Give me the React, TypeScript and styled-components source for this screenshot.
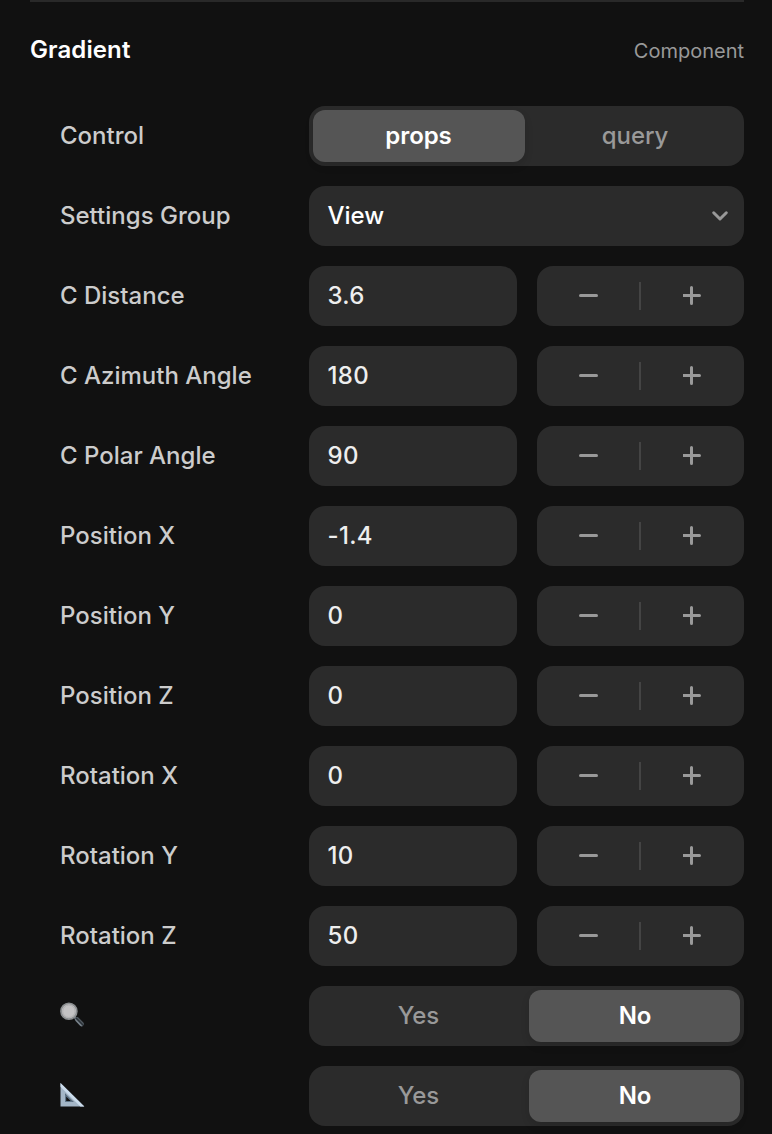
import React, { useState } from 'react';
import styled, { createGlobalStyle } from 'styled-components';

const GlobalStyle = createGlobalStyle`
  * { box-sizing: border-box; }
  body {
    margin: 0;
    background: #111111;
    font-family: Inter, sans-serif;
    -webkit-font-smoothing: antialiased;
  }
  button, input { font: inherit; letter-spacing: inherit; }
`;

const Panel = styled.main`
  width: 772px;
  height: 1134px;
  padding: 0 28px 0 30px;
  overflow: hidden;
  font-size: 24px;
  line-height: 30px;
  color: #cccccc;
`;

const Header = styled.header`
  display: flex;
  align-items: center;
  justify-content: space-between;
  height: 106px;
  padding-bottom: 8px;
  border-top: 2px solid #292929;
`;

const Title = styled.h2`
  margin: 0;
  font-size: 24px;
  font-weight: 600;
  letter-spacing: 0.1px;
  color: #ffffff;
`;

const Kind = styled.span`
  padding-top: 1px;
  font-size: 20px;
  color: #999999;
`;

const Rows = styled.div`
  display: flex;
  flex-direction: column;
  gap: 20px;
  padding-left: 30px;
`;

const Row = styled.div`
  display: grid;
  grid-template-columns: 249px 435px;
  align-items: center;
  height: 60px;
`;

const Label = styled.span`
  display: flex;
  font-weight: 500;
  white-space: nowrap;
`;

const IconLabel = styled(Label)`
  padding-bottom: 2px;
`;

const Segments = styled.div`
  display: grid;
  grid-template-columns: 212px 211px;
  gap: 4px;
  height: 60px;
  padding: 4px;
  border-radius: 16px;
  background: #2b2b2b;
`;

const Segment = styled.button<{ $active: boolean }>`
  padding: 0 1px 0 0;
  border: 0;
  border-radius: 12px;
  background: ${({ $active }) => ($active ? '#555555' : 'transparent')};
  box-shadow: ${({ $active }) => ($active ? '0 4px 8px rgba(0, 0, 0, 0.12)' : 'none')};
  color: ${({ $active }) => ($active ? '#ffffff' : '#999999')};
  font-weight: ${({ $active }) => ($active ? 600 : 500)};
  letter-spacing: -0.1px;

  &:last-child { padding: 0 0 0 1px; }
`;

const Select = styled.button`
  display: flex;
  align-items: center;
  justify-content: space-between;
  height: 60px;
  padding: 0 15px 0 18.5px;
  border: 0;
  border-radius: 16px;
  background: #2b2b2b;
  color: #ffffff;
  font-weight: 500;
`;

const NumberControl = styled.div`
  display: grid;
  grid-template-columns: 208px 207px;
  gap: 20px;
`;

const NumberField = styled.input`
  width: 100%;
  height: 60px;
  padding: 0 18.5px 2px;
  border: 0;
  border-radius: 16px;
  outline: none;
  background: #2b2b2b;
  color: #eeeeee;
  font-weight: 450;
  letter-spacing: 0.3px;
`;

const Stepper = styled.div`
  display: grid;
  grid-template-columns: 102px 2px 103px;
  align-items: center;
  height: 60px;
  border-radius: 16px;
  background: #2b2b2b;
`;

const StepButton = styled.button`
  display: flex;
  align-items: center;
  justify-content: center;
  height: 60px;
  padding: 0;
  border: 0;
  background: none;
  color: #999999;
`;

const Divider = styled.span`
  height: 28px;
  background: #444444;
`;

const Chevron = () => (
  <svg width="18" height="12" viewBox="0 0 18 12" fill="none" stroke="#999999" strokeWidth="3" strokeLinecap="round" strokeLinejoin="round">
    <path d="M2.7 2.8 9 9l6.3-6.2" />
  </svg>
);

const StepIcon = ({ plus = false }: { plus?: boolean }) => (
  <svg width="20" height="20" viewBox="0 0 20 20" fill="none" stroke="currentColor" strokeWidth="3" strokeLinecap="round">
    <path d={plus ? 'M1 9.5h16M9 1.5v16' : 'M2.5 9.5h16'} transform={plus ? 'translate(-0.5 0)' : undefined} />
  </svg>
);

const Magnifier = () => (
  <svg width="26" height="26" viewBox="0 0 26 26" role="img" aria-label="Zoom">
    <defs>
      <linearGradient id="handle" x1="0" y1="1" x2="1" y2="0">
        <stop offset="0.3" stopColor="#77818a" />
        <stop offset="0.5" stopColor="#232a30" />
        <stop offset="0.8" stopColor="#596168" />
      </linearGradient>
    </defs>
    <path d="m14.5 15 3 3" stroke="#687078" strokeWidth="2.5" />
    <path d="m17.2 17.5 4.5 4.6" stroke="url(#handle)" strokeWidth="4.6" strokeLinecap="round" />
    <path d="m17 19 3.7 3.7" stroke="#7b858d" strokeWidth="0.7" strokeLinecap="round" />
    <circle cx="8.9" cy="9.3" r="7.9" fill="#c3c2c3" stroke="#8b8e90" strokeWidth="1.8" />
    <circle cx="8.9" cy="9.3" r="6.2" fill="none" stroke="#aaaaab" strokeWidth="0.8" />
  </svg>
);

const SetSquare = () => (
  <svg width="26" height="26" viewBox="0 0 26 26" role="img" aria-label="Angle">
    <path fill="#a4b6c7" fillRule="evenodd" d="M0.5 1v23.4h23.8zM5 11.4 13.6 20H5z" />
    <path fill="#cbdcec" d="M0.5 1v3.8l19.8 19.6h4z" />
    <path fill="#60768a" d="M5 11.4 13.6 20H5zm1.2 3V19h4.6z" fillRule="evenodd" />
  </svg>
);

function Segmented({ options, initial }: { options: string[]; initial: string }) {
  const [value, setValue] = useState(initial);
  return (
    <Segments>
      {options.map((option) => (
        <Segment key={option} $active={option === value} onClick={() => setValue(option)}>
          {option}
        </Segment>
      ))}
    </Segments>
  );
}

function NumberRow({ label, initial }: { label: string; initial: number }) {
  const [value, setValue] = useState(String(initial));
  const step = (amount: number) => setValue(String(Number((Number(value) + amount).toFixed(2))));
  return (
    <Row>
      <Label>{label}</Label>
      <NumberControl>
        <NumberField aria-label={label} value={value} onChange={(e) => setValue(e.target.value)} />
        <Stepper>
          <StepButton aria-label="Decrease" onClick={() => step(-1)}><StepIcon /></StepButton>
          <Divider />
          <StepButton aria-label="Increase" onClick={() => step(1)}><StepIcon plus /></StepButton>
        </Stepper>
      </NumberControl>
    </Row>
  );
}

const numbers: [string, number][] = [
  ['C Distance', 3.6],
  ['C Azimuth Angle', 180],
  ['C Polar Angle', 90],
  ['Position X', -1.4],
  ['Position Y', 0],
  ['Position Z', 0],
  ['Rotation X', 0],
  ['Rotation Y', 10],
  ['Rotation Z', 50],
];

export default function App() {
  return (
    <>
      <GlobalStyle />
      <Panel>
        <Header>
          <Title>Gradient</Title>
          <Kind>Component</Kind>
        </Header>
        <Rows>
          <Row>
            <Label>Control</Label>
            <Segmented options={['props', 'query']} initial="props" />
          </Row>
          <Row>
            <Label>Settings Group</Label>
            <Select>View<Chevron /></Select>
          </Row>
          {numbers.map(([label, initial]) => (
            <NumberRow key={label} label={label} initial={initial} />
          ))}
          <Row>
            <IconLabel><Magnifier /></IconLabel>
            <Segmented options={['Yes', 'No']} initial="No" />
          </Row>
          <Row>
            <IconLabel><SetSquare /></IconLabel>
            <Segmented options={['Yes', 'No']} initial="No" />
          </Row>
        </Rows>
      </Panel>
    </>
  );
}
